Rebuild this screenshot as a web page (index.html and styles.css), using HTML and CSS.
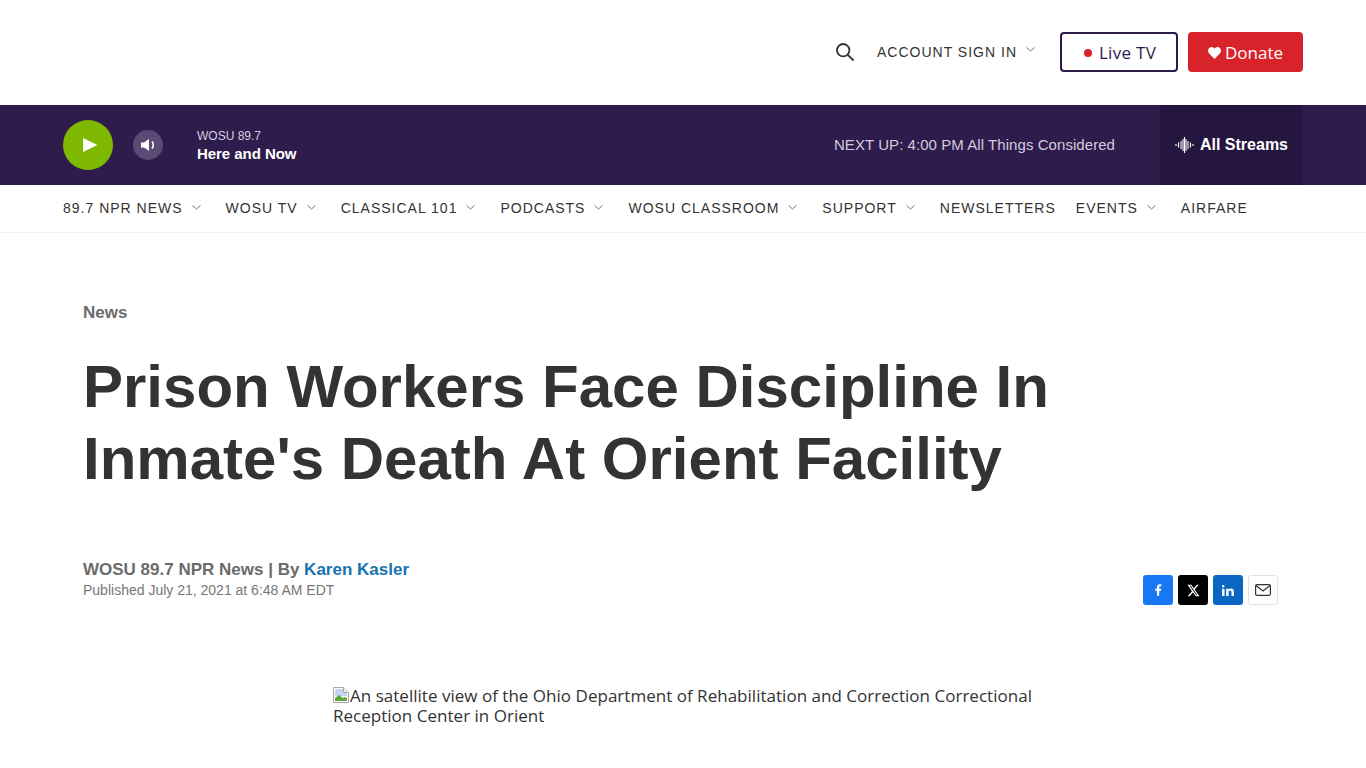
FILE: index.html
```html
<!DOCTYPE html>
<html lang="en">
<head>
    <meta charset="UTF-8">
    <meta name="viewport" content="width=device-width, initial-scale=1.0">
    <title>Prison Workers Face Discipline In Inmate's Death At Orient Facility</title>
    <link rel="stylesheet" href="styles.css">
</head>
<body>
    <header class="top-bar">
        <svg class="search-icon" width="20" height="20" viewBox="0 0 20 20"><circle cx="8.2" cy="8.2" r="6.2"/><path d="M12.8 12.8 L18.5 18.5"/></svg>
        <a class="account">ACCOUNT SIGN IN</a>
        <svg class="chevron account-chevron" width="9" height="5" viewBox="0 0 9 5"><path d="M.5.5 4.5 4 8.5.5"/></svg>
        <a class="btn btn-live"><span class="live-dot"></span>Live TV</a>
        <a class="btn btn-donate">
            <svg width="13" height="12" viewBox="0 0 14 13"><path d="M7 13 1.2 7C-.4 5.300-.4 2.800 1 1.300 2.500-.3 5-.3 6.400 1.200L7 1.900l.6-.7C9-.3 11.500-.3 13 1.300c1.400 1.500 1.400 4-.2 5.700z"/></svg>
            Donate
        </a>
    </header>

    <section class="player">
        <button class="play-btn"><svg width="16" height="14" viewBox="0 0 16 14"><path d="M1 0 15.500 7 1 14z"/></svg></button>
        <button class="vol-btn"><svg width="15" height="14" viewBox="0 0 15 14"><path d="M0 4.500h3L8 1v12L3 9.500H0z"/><path class="vol-wave" d="M11 3.500c1.500 2 1.500 5 0 7"/></svg></button>
        <div class="now-playing">
            <div class="station">WOSU 89.7</div>
            <div class="show">Here and Now</div>
        </div>
        <div class="next-up">NEXT UP: 4:00 PM All Things Considered</div>
        <a class="streams">
            <svg width="19" height="18" viewBox="0 0 19 18"><path d="M1 8v2M3.500 6.500v5M6 5v8M8 3v12M9.500 1v16M11 3v12M13 5v8M15.500 6.500v5M18 8v2"/></svg>
            All Streams
        </a>
    </section>

    <nav class="main-nav">
        <a class="nav-item">89.7 NPR NEWS<svg class="chevron" width="9" height="5" viewBox="0 0 9 5"><path d="M.5.5 4.500 4 8.500.5"/></svg></a>
        <a class="nav-item">WOSU TV<svg class="chevron" width="9" height="5" viewBox="0 0 9 5"><path d="M.5.5 4.500 4 8.500.5"/></svg></a>
        <a class="nav-item">CLASSICAL 101<svg class="chevron" width="9" height="5" viewBox="0 0 9 5"><path d="M.5.5 4.500 4 8.500.5"/></svg></a>
        <a class="nav-item">PODCASTS<svg class="chevron" width="9" height="5" viewBox="0 0 9 5"><path d="M.5.5 4.500 4 8.500.5"/></svg></a>
        <a class="nav-item">WOSU CLASSROOM<svg class="chevron" width="9" height="5" viewBox="0 0 9 5"><path d="M.5.5 4.500 4 8.500.5"/></svg></a>
        <a class="nav-item">SUPPORT<svg class="chevron" width="9" height="5" viewBox="0 0 9 5"><path d="M.5.5 4.500 4 8.500.5"/></svg></a>
        <a class="nav-item plain">NEWSLETTERS</a>
        <a class="nav-item">EVENTS<svg class="chevron" width="9" height="5" viewBox="0 0 9 5"><path d="M.5.5 4.500 4 8.500.5"/></svg></a>
        <a class="nav-item plain">AIRFARE</a>
    </nav>

    <main class="article">
        <div class="category">News</div>
        <h1>Prison Workers Face Discipline In Inmate's Death At Orient Facility</h1>
        <div class="byline-row">
            <div class="byline">
                <div class="author">WOSU 89.7 NPR News | By <a>Karen Kasler</a></div>
                <div class="published">Published July 21, 2021 at 6:48 AM EDT</div>
            </div>
            <div class="share">
                <a class="share-btn fb"><svg width="7" height="12" viewBox="0 0 8 13"><path d="M2.300 13V7.300H.3V5h2V3.300C2.300 1.200 3.500 0 5.400 0c.9 0 1.600.1 1.900.1v2.100H6c-1 0-1.200.5-1.200 1.200V5h2.400l-.3 2.300H4.800V13z"/></svg></a>
                <a class="share-btn tw"><svg width="13" height="13" viewBox="0 0 24 24"><path d="M18.200 1.500h3.400l-7.400 8.500L23 22.500h-6.800l-5.300-7-6.100 7H1.300l7.900-9.100L.9 1.500h7l4.800 6.400zm-1.200 19h1.900L6.800 3.400h-2z"/></svg></a>
                <a class="share-btn li"><svg width="12" height="11" viewBox="0 0 13 12"><path d="M0 4h2.700v8H0zM1.300 0a1.400 1.400 0 1 1 0 2.800 1.400 1.400 0 0 1 0-2.800zM4.500 4h2.600v1.100C7.500 4.400 8.400 3.800 9.700 3.800c2.500 0 3.300 1.500 3.300 4V12h-2.700V8.300c0-1.200-.2-2.200-1.500-2.200s-1.600 1-1.600 2.100V12H4.500z"/></svg></a>
                <a class="share-btn mail"><svg width="16" height="12" viewBox="0 0 16 12"><rect x=".6" y=".6" width="14.800" height="10.800" rx="1.500"/><path d="M1 1.500 8 7l7-5.500"/></svg></a>
            </div>
        </div>
        <figure class="lead-image">
            <svg class="broken-img" width="16" height="16" viewBox="0 0 16 16"><path class="bi-page" d="M.5.500h10l5 5v10H.5z"/><path class="bi-fold" d="M10.500.5v5h5"/><path class="bi-sky" d="M2 2h8v4h4v3H2z"/><path class="bi-hill" d="M2 14v-3l4-3 4 3 2-1 2 1v3z"/></svg>An satellite view of the Ohio Department of Rehabilitation and Correction Correctional Reception Center in Orient
        </figure>
    </main>
</body>
</html>
```

FILE: styles.css
```css
html, body {
    margin: 0;
    padding: 0;
    overflow: hidden;
}

body {
    font-family: "Liberation Sans", Arial, sans-serif;
    background-color: #fff;
    color: #333;
    height: 768px;
}

a {
    text-decoration: none;
}

.top-bar {
    height: 105px;
    box-sizing: border-box;
    padding: 0 63px 2px;
    display: flex;
    align-items: center;
    justify-content: flex-end;
}

.search-icon {
    fill: none;
    stroke: #333;
    stroke-width: 1.8;
    margin-right: 22px;
}

.account {
    font-size: 14px;
    letter-spacing: 1px;
    color: #333;
}

.chevron {
    fill: none;
    stroke: #777;
    stroke-width: 1;
}

.account-chevron {
    margin: 0 24px 0 9px;
    position: relative;
    top: -2px;
}

.btn {
    box-sizing: border-box;
    height: 40px;
    padding-top: 2px;
    border-radius: 4px;
    display: flex;
    align-items: center;
    justify-content: center;
    font-family: "Open Sans", "Noto Sans", sans-serif;
    font-size: 17px;
}

.btn-live {
    width: 118px;
    border: 2px solid #2c1a4a;
    color: #2c1a4a;
    margin: 0 10px 0 1px;
    padding-left: 2px;
    letter-spacing: 0.3px;
}

.live-dot {
    width: 8px;
    height: 8px;
    border-radius: 50%;
    background: #d8232a;
    margin-right: 7px;
}

.btn-donate {
    width: 115px;
    background: #d8232a;
    color: #fff;
}

.btn-donate svg {
    fill: #fff;
    margin-right: 4px;
}

.player {
    height: 80px;
    background: #2e1c4d;
    margin: 0;
    padding: 0 63px;
    display: flex;
    align-items: center;
    color: #fff;
}

.play-btn {
    width: 50px;
    height: 50px;
    border-radius: 50%;
    border: none;
    padding: 0 0 0 3px;
    background: #7fb800;
    display: flex;
    align-items: center;
    justify-content: center;
    margin-right: 20px;
}

.play-btn svg {
    fill: #fff;
}

.vol-btn {
    width: 30px;
    height: 30px;
    border-radius: 50%;
    border: none;
    padding: 0;
    background: #5a4a75;
    display: flex;
    align-items: center;
    justify-content: center;
    margin-right: 34px;
}

.vol-btn svg {
    fill: #fff;
}

.vol-btn .vol-wave {
    fill: none;
    stroke: #fff;
    stroke-width: 1.6;
}

.station {
    font-size: 12px;
    color: #d6cfe0;
    line-height: 16px;
    padding-top: 1px;
}

.show {
    font-size: 15px;
    font-weight: bold;
    line-height: 20px;
    letter-spacing: -0.05px;
}

.next-up {
    margin-left: auto;
    font-size: 15px;
    color: #d3cbdd;
    letter-spacing: 0.06px;
    margin-right: 45px;
    padding-bottom: 2px;
}

.streams {
    width: 143px;
    height: 80px;
    background: #24163e;
    display: flex;
    align-items: center;
    justify-content: center;
    font-size: 16px;
    font-weight: bold;
    color: #fff;
}

.streams svg {
    fill: none;
    stroke: #fff;
    stroke-width: 1.1;
    margin-right: 6px;
}

.main-nav {
    height: 48px;
    box-sizing: border-box;
    border-bottom: 1px solid #f0f0f0;
    padding: 0 63px 2px;
    display: flex;
    align-items: center;
}

.nav-item {
    font-size: 14px;
    letter-spacing: 1px;
    color: #333;
    margin-right: 25px;
    white-space: nowrap;
}

.nav-item .chevron {
    margin-left: 9px;
    position: relative;
    top: -3px;
}

.nav-item.plain {
    margin-right: 20px;
}

.article {
    padding: 71px 88px 0 83px;
}

.category {
    font-size: 17px;
    font-weight: bold;
    color: #6b6b6b;
    line-height: 18px;
}

h1 {
    font-size: 60px;
    line-height: 72px;
    font-weight: bold;
    color: #333;
    margin: 29px 0 0;
    max-width: 1050px;
}

.byline-row {
    display: flex;
    justify-content: space-between;
    align-items: flex-start;
    margin-top: 64px;
}

.author {
    font-size: 17px;
    font-weight: bold;
    color: #6b6b6b;
    line-height: 22px;
}

.author a {
    color: #1772b0;
}

.published {
    font-size: 14px;
    color: #777;
    line-height: 20px;
    margin-top: -1px;
}

.share {
    display: flex;
    gap: 5px;
    margin-top: 16px;
}

.share-btn {
    width: 30px;
    height: 30px;
    box-sizing: border-box;
    border-radius: 3px;
    display: flex;
    align-items: center;
    justify-content: center;
    fill: #fff;
}

.fb { background: #1877f2; }
.tw { background: #000; }
.li { background: #0a66c2; }

.mail {
    background: #fff;
    border: 1px solid #e4e4e4;
}

.mail svg {
    fill: none;
    stroke: #333;
    stroke-width: 1.2;
}

.lead-image {
    margin: 81px 0 0 250px;
    width: 720px;
    font-family: "Open Sans", "Noto Sans", sans-serif;
    font-size: 17px;
    letter-spacing: 0.02px;
    line-height: 20px;
    color: #333;
}

.broken-img {
    vertical-align: -1px;
    margin-right: 1px;
}

.bi-page { fill: #fff; stroke: #a8a8a8; }
.bi-fold { fill: #eee; stroke: #a8a8a8; }
.bi-sky { fill: #c3d5f2; }
.bi-hill { fill: #5fa83c; }
```
